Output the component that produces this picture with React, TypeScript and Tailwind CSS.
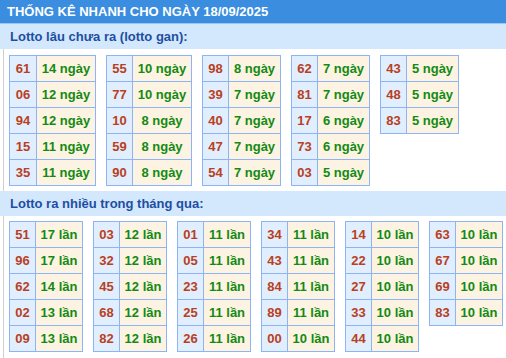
import React from "react";

type Row = [string, string];

const gan: Row[][] = [
  [["61", "14 ngày"], ["06", "12 ngày"], ["94", "12 ngày"], ["15", "11 ngày"], ["35", "11 ngày"]],
  [["55", "10 ngày"], ["77", "10 ngày"], ["10", "8 ngày"], ["59", "8 ngày"], ["90", "8 ngày"]],
  [["98", "8 ngày"], ["39", "7 ngày"], ["40", "7 ngày"], ["47", "7 ngày"], ["54", "7 ngày"]],
  [["62", "7 ngày"], ["81", "7 ngày"], ["17", "6 ngày"], ["73", "6 ngày"], ["03", "5 ngày"]],
  [["43", "5 ngày"], ["48", "5 ngày"], ["83", "5 ngày"]],
];

const ganCols = [
  "grid-cols-[27px_59px]",
  "grid-cols-[26px_59px]",
  "grid-cols-[26px_52px]",
  "grid-cols-[26px_52px]",
  "grid-cols-[26px_52px]",
];

const nhieu: Row[][] = [
  [["51", "17 lần"], ["96", "17 lần"], ["62", "14 lần"], ["02", "13 lần"], ["09", "13 lần"]],
  [["03", "12 lần"], ["32", "12 lần"], ["45", "12 lần"], ["68", "12 lần"], ["82", "12 lần"]],
  [["01", "11 lần"], ["05", "11 lần"], ["23", "11 lần"], ["25", "11 lần"], ["26", "11 lần"]],
  [["34", "11 lần"], ["43", "11 lần"], ["84", "11 lần"], ["89", "11 lần"], ["00", "10 lần"]],
  [["14", "10 lần"], ["22", "10 lần"], ["27", "10 lần"], ["33", "10 lần"], ["44", "10 lần"]],
  [["63", "10 lần"], ["67", "10 lần"], ["69", "10 lần"], ["83", "10 lần"]],
];

function Table({ rows, cols }: { rows: Row[]; cols: string }) {
  return (
    <div
      className={`grid ${cols} auto-rows-[26px] border-l border-t border-[#8db4f5] self-start shrink-0 whitespace-nowrap`}
    >
      {rows.map(([n, v], i) => (
        <React.Fragment key={i}>
          <div className="border-r border-b border-[#8db4f5] bg-[#e1eefd] text-[#b8401f] flex items-center justify-center">
            {n}
          </div>
          <div className="border-r border-b border-[#8db4f5] bg-[#fdf3e2] text-[#138a13] flex items-center justify-center">
            {v}
          </div>
        </React.Fragment>
      ))}
    </div>
  );
}

export default function App() {
  return (
    <div
      className="w-[506px] h-[358px] bg-white overflow-hidden text-[13px] font-bold leading-none"
      style={{ fontFamily: '"Liberation Sans", Arial, sans-serif' }}
    >
      <div className="h-[23px] bg-[#3a8ddf] text-white flex items-center pl-[7px] border-b border-[#9cc5ee] box-content whitespace-nowrap">
        THỐNG KÊ NHANH CHO NGÀY 18/09/2025
      </div>
      <div className="h-[25px] bg-[#d3e8fc] text-[#1d4ea3] flex items-center pl-[10px]">
        Lotto lâu chưa ra (lotto gan):
      </div>
      <div className="ml-[3px] border-l border-[#cfcfcf] pl-[5px] pt-[6px] pb-[5px] flex gap-[10px]">
        {gan.map((t, i) => (
          <Table key={i} rows={t} cols={ganCols[i]} />
        ))}
      </div>
      <div className="h-[25px] bg-[#d3e8fc] text-[#1d4ea3] flex items-center pl-[10px]">
        Lotto ra nhiều trong tháng qua:
      </div>
      <div className="ml-[3px] border-l border-[#cfcfcf] pl-[5px] pt-[5px] pb-[10px] flex gap-[10px]">
        {nhieu.map((t, i) => (
          <Table key={i} rows={t} cols="grid-cols-[26px_47px]" />
        ))}
      </div>
    </div>
  );
}
